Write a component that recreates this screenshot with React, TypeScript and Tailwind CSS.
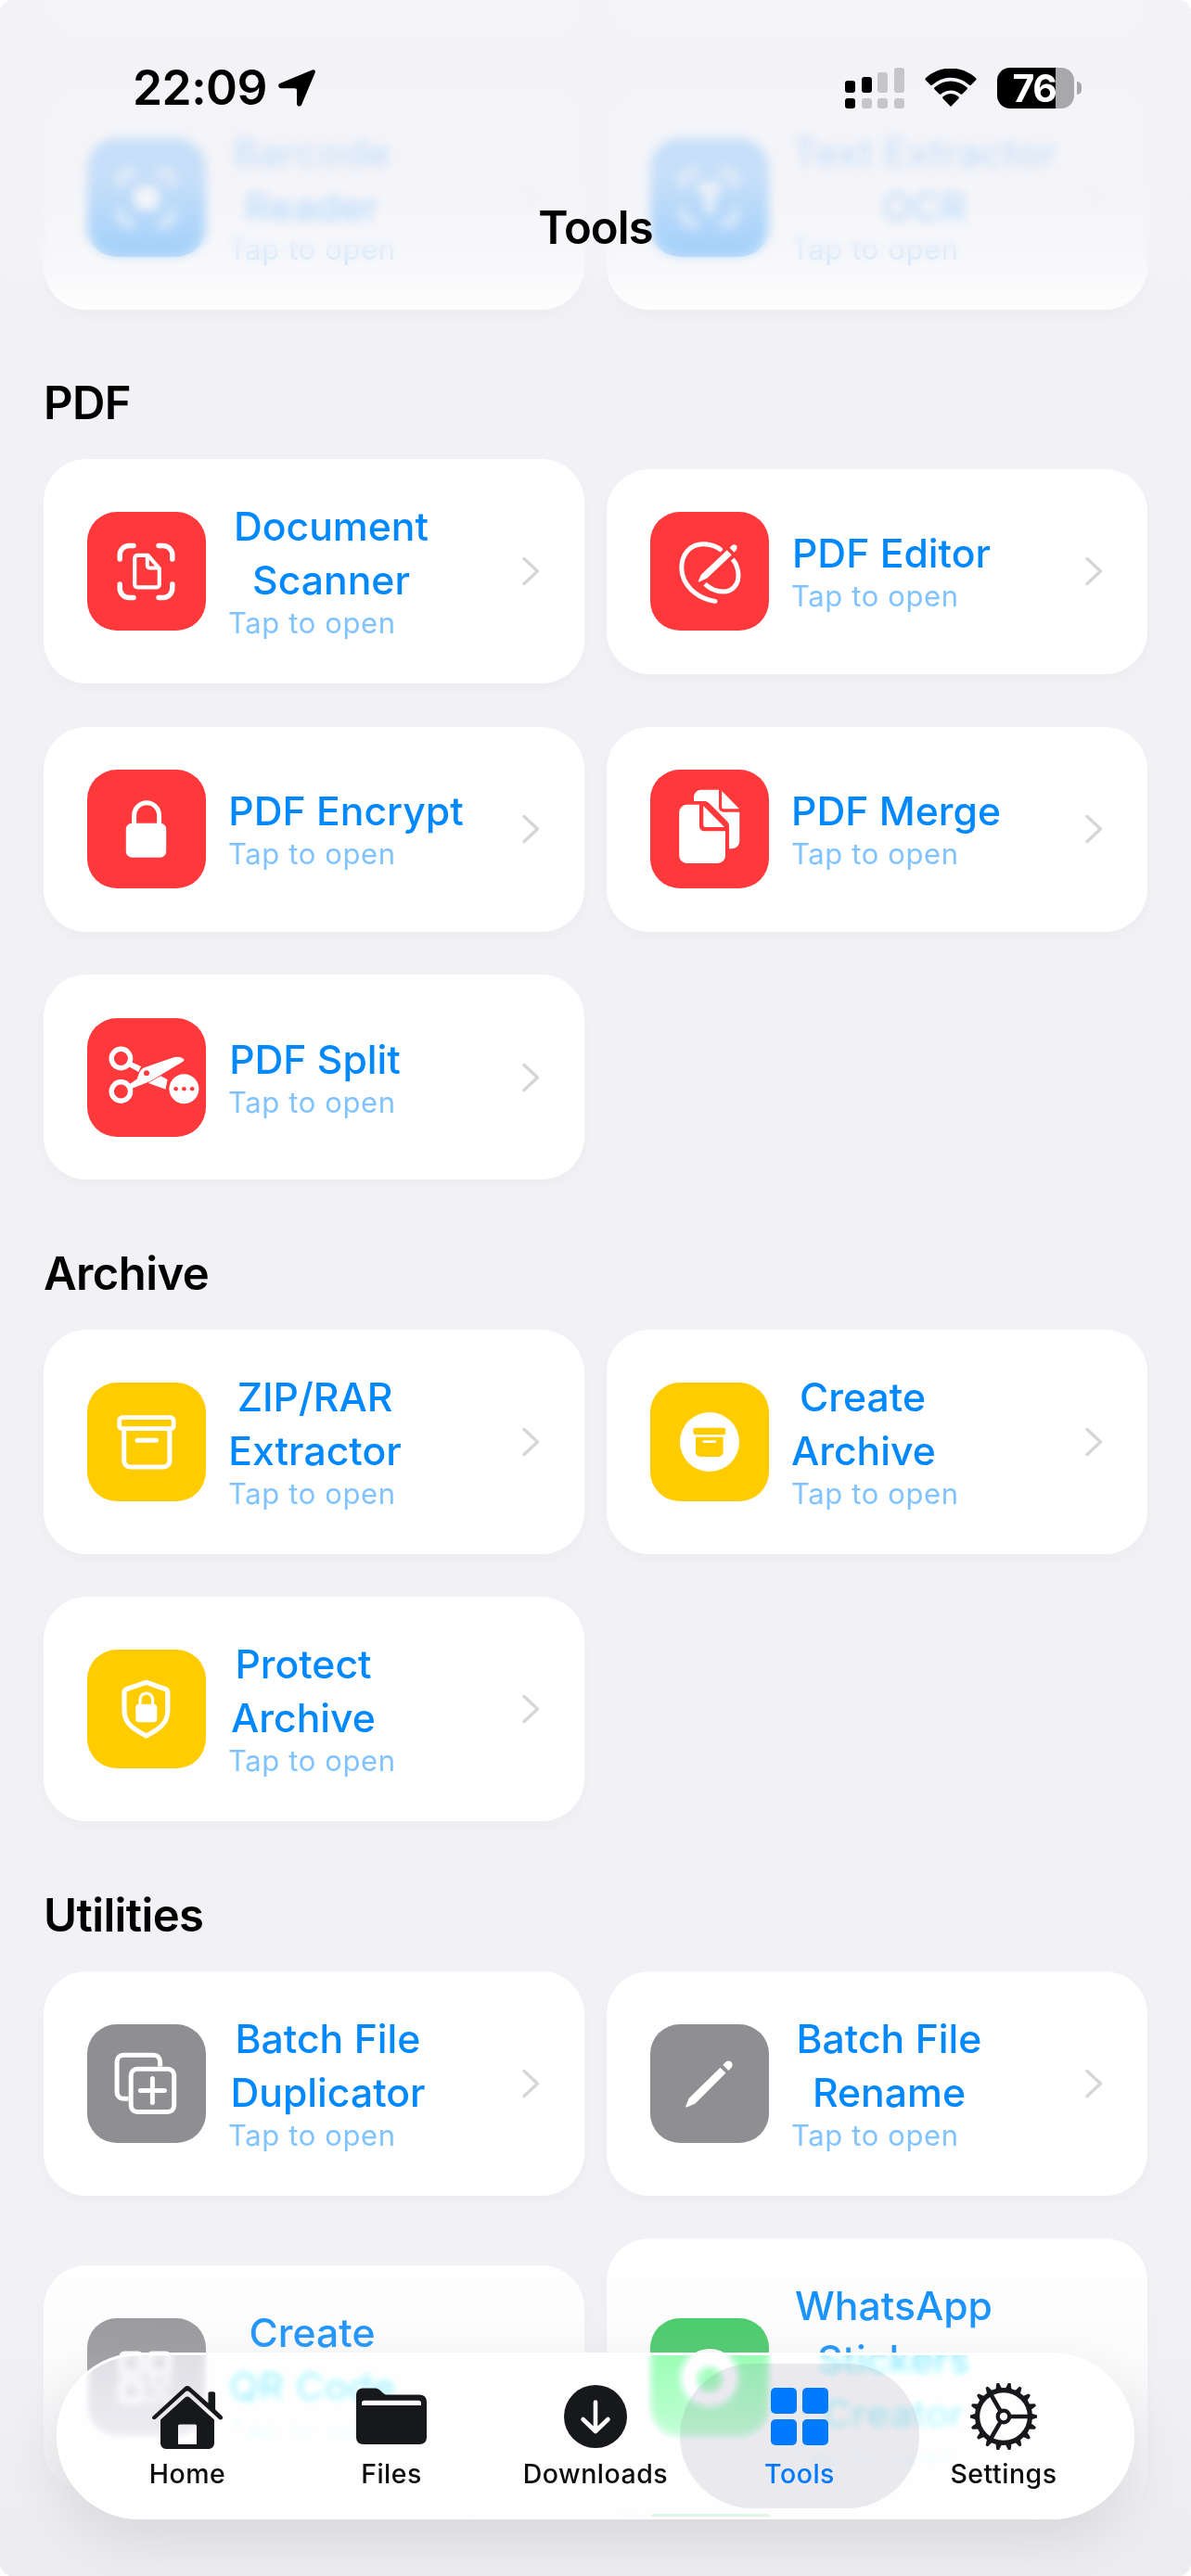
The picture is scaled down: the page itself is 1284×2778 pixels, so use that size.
import type {ReactNode} from "react";

type IconProps = { children: ReactNode };

const TileIcon = ({children}: IconProps) => (
    <svg viewBox="0 0 128 128" className="w-full h-full" fill="none" strokeLinecap="round" strokeLinejoin="round">
        {children}
    </svg>
);

const Brackets = () => (
    <path
        d="M35.2 51V46.5a10 10 0 0 1 10-10H50M77 36.5h4.8a10 10 0 0 1 10 10V51M91.8 78v4.5a10 10 0 0 1-10 10H77M50 92.5h-4.8a10 10 0 0 1-10-10V78"
        stroke="white" strokeWidth="5.4"/>
);

const BarcodeIcon = () => (
    <TileIcon>
        <Brackets/>
        <rect x="51" y="52" width="26" height="25" rx="4" fill="white"/>
    </TileIcon>
);

const TextScanIcon = () => (
    <TileIcon>
        <Brackets/>
        <path d="M54 53h20M64 53v24" stroke="white" strokeWidth="9"/>
    </TileIcon>
);

const ScannerIcon = () => (
    <TileIcon>
        <Brackets/>
        <path d="M54.5 46.8h11L77.8 61v17.3a3 3 0 0 1-3 3H54.2a3 3 0 0 1-3-3V49.8a3 3 0 0 1 3-3z" stroke="white" strokeWidth="4.2"/>
        <path d="M64.8 47.5V58a2.6 2.6 0 0 0 2.6 2.6h10" stroke="white" strokeWidth="4"/>
    </TileIcon>
);

const EditorIcon = () => (
    <TileIcon>
        <path d="M75.5 40.5C70 36 63 34.7 57 34.7C43 34.7 33.8 46 33.8 60C33.8 78 49 93 70 96.4" stroke="white" strokeWidth="5"/>
        <path d="M88.8 51C93 56 95 62 95 69C95 79 88 86 79 86C71 86 64 82.5 59 77.8" stroke="white" strokeWidth="5" strokeLinecap="butt"/>
        <path d="M82.8 41.2l5 5.2L61 71.7l-8.2 3.8c-.8.3-1.2-.3-.9-1l3-6.8z" fill="white"/>
        <path d="M85.6 38.7l2.7-2.6c3-2.6 7.2 1.6 4.6 4.7l-2.4 3z" fill="white"/>
    </TileIcon>
);

const LockIcon = () => (
    <TileIcon>
        <path d="M50.6 60V49.5a13.5 13.8 0 0 1 27 0V60" stroke="white" strokeWidth="5"/>
        <rect x="41.8" y="57.7" width="43.4" height="37" rx="6.5" fill="white"/>
    </TileIcon>
);

const MergeIcon = () => (
    <TileIcon>
        <path d="M47 34v-4.3a8 8 0 0 1 8-8h19v19a5 5 0 0 0 5 5h17.3v31.5a8 8 0 0 1-8 8h-3.2V61c0-2-.8-3.7-2.2-5.2L64.4 37c-2-2-3.8-3-6.2-3z" fill="white"/>
        <path d="M77.2 23L96 42.3H79a1.8 1.8 0 0 1-1.8-1.8z" fill="white"/>
        <path d="M39.5 37.7H53V61a5.2 5.2 0 0 0 5.2 5.2H81V92.7a8.3 8.3 0 0 1-8.3 8.3H39.5a8.3 8.3 0 0 1-8.3-8.3V46a8.3 8.3 0 0 1 8.3-8.3z" fill="white"/>
        <path d="M57.3 39L80 62H59.3a2 2 0 0 1-2-2z" fill="white"/>
    </TileIcon>
);

const SplitIcon = () => (
    <TileIcon>
        <circle cx="36.4" cy="43.5" r="10.2" stroke="white" strokeWidth="5.4"/>
        <circle cx="36.4" cy="79" r="10.2" stroke="white" strokeWidth="5.4"/>
        <path d="M46 46.5l12 5.5-2.5 6L44.5 52z" fill="white"/>
        <path d="M45 71.5l9-6c1.5-5.5 2.5-9.5 7-12L91 43c5-1.7 10-2 13.5 1.5-.2 1.5-.8 2-2 2.8L68 68 48 76z" fill="white"/>
        <circle cx="64" cy="59.3" r="3" fill="#ff383c"/>
        <path d="M65.8 70l13.5-7.7 7.2 4-2 10.5z" fill="white"/>
        <circle cx="104.4" cy="76.3" r="16" fill="white"/>
        <circle cx="95.6" cy="76.3" r="2.3" fill="#ff383c"/>
        <circle cx="104.4" cy="76.3" r="2.3" fill="#ff383c"/>
        <circle cx="113.2" cy="76.3" r="2.3" fill="#ff383c"/>
    </TileIcon>
);

const ArchiveIcon = () => (
    <TileIcon>
        <rect x="34.7" y="37.7" width="58.4" height="12" rx="3" stroke="white" strokeWidth="4.8"/>
        <path d="M39.7 50v34.5a6.5 6.5 0 0 0 6.5 6.5h36.2a6.5 6.5 0 0 0 6.5-6.5V50M54 62.3h20.5" stroke="white" strokeWidth="5"/>
    </TileIcon>
);

const CreateArchiveIcon = () => (
    <TileIcon>
        <circle cx="64" cy="64" r="32" fill="white"/>
        <rect x="46.5" y="48.8" width="34.6" height="7.4" rx="1.8" fill="#ffcc00"/>
        <path d="M49 58.7h29.6V75a5 5 0 0 1-5 5H54a5 5 0 0 1-5-5z" fill="#ffcc00"/>
        <rect x="56.5" y="62.2" width="14.6" height="2.9" rx="1" fill="white"/>
    </TileIcon>
);

const ShieldIcon = () => (
    <TileIcon>
        <path d="M63.7 35.2l20.4 7.3a4 4 0 0 1 2.7 3.8V66c0 14.5-11 20.5-23.1 27C51.5 86.5 40 80.5 40 66V46.3a4 4 0 0 1 2.7-3.8z" stroke="white" strokeWidth="5.2"/>
        <path d="M57 61v-7.2a6.8 6.8 0 0 1 13.6 0V61" stroke="white" strokeWidth="3.2"/>
        <rect x="52.3" y="58.8" width="23" height="19.5" rx="3.5" fill="white"/>
    </TileIcon>
);

const DuplicateIcon = () => (
    <TileIcon>
        <path d="M44.5 80.2h-5.7a6.7 6.7 0 0 1-6.7-6.7V39.9a6.7 6.7 0 0 1 6.7-6.7h33.1a6.7 6.7 0 0 1 6.7 6.7v5.6" stroke="white" strokeWidth="5" strokeLinecap="butt"/>
        <rect x="47.2" y="48.2" width="46.5" height="46.3" rx="6.7" stroke="white" strokeWidth="5"/>
        <path d="M70.4 58.5v26M57.4 71.5h26" stroke="white" strokeWidth="5"/>
    </TileIcon>
);

const PencilIcon = () => (
    <TileIcon>
        <path d="M75.5 46.7l6 5.8L48.5 85.5l-9 4c-.9.3-1.5-.4-1.2-1.2l3.5-8.6z" fill="white"/>
        <path d="M78.3 43.8l2.9-2.9c4.5-4 10 1.6 6.1 6.1l-2.9 2.9z" fill="white"/>
    </TileIcon>
);

const QrIcon = () => (
    <TileIcon>
        <rect x="37" y="38" width="21" height="21" rx="3" stroke="white" strokeWidth="5"/>
        <rect x="67" y="38" width="21" height="21" rx="3" stroke="white" strokeWidth="5"/>
        <rect x="37" y="68" width="21" height="21" rx="3" stroke="white" strokeWidth="5"/>
        <path d="M68 69h4M84 69h4M76 78h4M68 88h4M84 88h4" stroke="white" strokeWidth="6"/>
    </TileIcon>
);

const StickerIcon = () => (
    <TileIcon>
        <circle cx="64" cy="64" r="31" fill="white"/>
        <circle cx="64" cy="66" r="14" fill="#34c759"/>
    </TileIcon>
);

type Tool = {
    title: string[];
    // width of the centred title block
    titleWidth: string;
    color: string;
    icon: ReactNode;
};

const scanTools: Tool[] = [
    {title: ["Barcode", "Reader"], titleWidth: "w-[180px]", color: "bg-[#0088ff]", icon: <BarcodeIcon/>},
    {title: ["Text Extractor", "OCR"], titleWidth: "w-[287px]", color: "bg-[#0088ff]", icon: <TextScanIcon/>},
];

const sections: { name: string; tools: Tool[] }[] = [
    {
        name: "PDF",
        tools: [
            {title: ["Document", "Scanner"], titleWidth: "w-[222px]", color: "bg-[#ff383c]", icon: <ScannerIcon/>},
            {title: ["PDF Editor"], titleWidth: "w-[216px]", color: "bg-[#ff383c]", icon: <EditorIcon/>},
            {title: ["PDF Encrypt"], titleWidth: "w-[254px]", color: "bg-[#ff383c]", icon: <LockIcon/>},
            {title: ["PDF Merge"], titleWidth: "w-[226px]", color: "bg-[#ff383c]", icon: <MergeIcon/>},
            {title: ["PDF Split"], titleWidth: "w-[187px]", color: "bg-[#ff383c]", icon: <SplitIcon/>},
        ],
    },
    {
        name: "Archive",
        tools: [
            {title: ["ZIP/RAR", "Extractor"], titleWidth: "w-[187px]", color: "bg-[#ffcc00]", icon: <ArchiveIcon/>},
            {title: ["Create", "Archive"], titleWidth: "w-[154px]", color: "bg-[#ffcc00]", icon: <CreateArchiveIcon/>},
            {title: ["Protect", "Archive"], titleWidth: "w-[162px]", color: "bg-[#ffcc00]", icon: <ShieldIcon/>},
        ],
    },
    {
        name: "Utilities",
        tools: [
            {title: ["Batch File", "Duplicator"], titleWidth: "w-[215px]", color: "bg-[#8e8e93]", icon: <DuplicateIcon/>},
            {title: ["Batch File", "Rename"], titleWidth: "w-[211px]", color: "bg-[#8e8e93]", icon: <PencilIcon/>},
            {title: ["Create", "QR Code"], titleWidth: "w-[181px]", color: "bg-[#8e8e93]", icon: <QrIcon/>},
            {title: ["WhatsApp", "Stickers", "Creator"], titleWidth: "w-[221px]", color: "bg-[#34c759]", icon: <StickerIcon/>},
        ],
    },
];

const ToolCard = ({tool}: { tool: Tool }) => (
    <div className="flex items-center rounded-[46px] bg-white py-[46.5px] pl-[47px] pr-[48px] shadow-[0_6px_14px_rgba(0,0,0,0.025)]">
        <div className={`size-32 shrink-0 overflow-hidden rounded-[32px] ${tool.color}`}>{tool.icon}</div>
        <div className="-mt-[2.5px] mb-[2.5px] ml-[24px] flex-1">
            <h3 className={`text-center text-[42.7px] font-medium leading-[58px] whitespace-nowrap text-[#0088ff] ${tool.titleWidth}`}>
                {tool.title.map((line) => <span key={line} className="block">{line}</span>)}
            </h3>
            <p className="text-[31px] leading-[33px] tracking-[0.6px] whitespace-nowrap text-[#80c3ff]">Tap to open</p>
        </div>
        <svg viewBox="0 0 20 34" className="h-[34px] w-5 shrink-0" fill="none" stroke="#d6d6d9" strokeWidth="3.5" strokeLinecap="round" strokeLinejoin="round">
            <path d="M3 3.5L17.5 17L3 30.5"/>
        </svg>
    </div>
);

const ToolGrid = ({tools}: { tools: Tool[] }) => (
    <div className="grid grid-cols-2 items-center gap-x-6 gap-y-[46.5px]">
        {tools.map((tool) => <ToolCard key={tool.title.join(" ")} tool={tool}/>)}
    </div>
);

const signalBars = [
    {top: "h-[13px]", topColor: "bg-black", bottomColor: "bg-black"},
    {top: "h-[17px]", topColor: "bg-black", bottomColor: "bg-[#c6c5ca]"},
    {top: "h-[22px]", topColor: "bg-[#c6c5ca]", bottomColor: "bg-[#c6c5ca]"},
    {top: "h-[27px]", topColor: "bg-[#c6c5ca]", bottomColor: "bg-[#c6c5ca]"},
];

const StatusBar = () => (
    <div className="flex h-[189px] items-center pl-[143px] pr-[118px]">
        <span className="text-[51.5px] font-semibold tracking-[-0.5px] text-black">22:09</span>
        <svg viewBox="0 0 40 40" className="ml-[12px] size-10">
            <path d="M36.5.6C38.8-.4 40.5 1.2 39.6 3.6L25.3 37.5c-1.2 3-5.3 2.6-5.3-.8V22.5c0-1.6-.7-2.3-2.3-2.3H3.2c-3.5 0-4.2-4.1-1-5.4z" fill="black"/>
        </svg>
        <div className="ml-auto flex h-11 items-end gap-[6.6px]">
            {signalBars.map((bar, index) => (
                <div key={index} className="flex flex-col gap-[6px]">
                    <div className={`w-[11px] rounded-[3px] ${bar.top} ${bar.topColor}`}/>
                    <div className={`h-[11px] w-[11px] rounded-[3px] ${bar.bottomColor}`}/>
                </div>
            ))}
        </div>
        <svg viewBox="0 0 56 41" className="ml-[22px] h-[41px] w-14">
            <path d="M28 41l-8.3-8.6c-.8-.9-.7-1.8.2-2.5a12.8 12.8 0 0 1 16.2 0c.9.7 1 1.6.2 2.5z"/>
            <path d="M15.4 27.3l-4.7-4.8c-.8-.8-.8-1.8.1-2.5a26 26 0 0 1 34.4 0c.9.7.9 1.7.1 2.5l-4.7 4.8c-.7.7-1.5.7-2.3 0a15.6 15.6 0 0 0-20.6 0c-.8.7-1.6.7-2.3 0z"/>
            <path d="M6 17.5L1 12.6c-.8-.8-.8-1.7.1-2.5a39.5 39.5 0 0 1 53.8 0c.9.8.9 1.7.1 2.5l-5 4.9c-.8.7-1.5.7-2.3 0a29 29 0 0 0-39.4 0c-.8.7-1.5.7-2.3 0z"/>
        </svg>
        <div className="ml-[22px] flex items-center">
            <div className="flex h-11 w-[83px] items-center justify-center rounded-[14px] bg-linear-to-r from-black from-[76%] to-[#a8a8aa] to-[76%]">
                <span className="-ml-[3px] text-[41px] font-bold leading-[44px] tracking-[-1.5px] text-white">76</span>
            </div>
            <div className="ml-[3px] h-[14px] w-[5px] rounded-r-full bg-[#a8a8aa]"/>
        </div>
    </div>
);

const HomeIcon = () => (
    <svg viewBox="0 0 80 70" className="h-[70px] w-20" fill="#17181b">
        <path d="M3 34.5L37 3.2c1.8-1.7 4.3-1.7 6 0L62.5 20.5V10.5c0-1.5.8-2.3 2.3-2.3h3c1.5 0 2.3.8 2.3 2.3v17L77 34c3 2.8-.4 6-3 3.7L42.5 8.7c-1.6-1.5-3.4-1.5-5 0L6 37.5c-2.8 2-5.5-1-3-3z"/>
        <path fillRule="evenodd" d="M11 38.5L37.5 14.5c1.6-1.5 3.4-1.5 5 0L69 38.5V64a6 6 0 0 1-6 6H17a6 6 0 0 1-6-6zM31.500 43.500a1.500 1.500 0 0 0-1.500 1.500v20h20V45a1.500 1.500 0 0 0-1.500-1.500z"/>
    </svg>
);

const FilesIcon = () => (
    <svg viewBox="0 0 76 62" className="h-[62px] w-[76px]">
        <path d="M0 8.500C0 3 3 .5 8 .5h11c3 0 5 .6 7 2.500l3 2.700C30.500 7 32 7.500 34 7.500h34c5.300 0 8 2.700 8 8V53c0 5.300-2.700 8-8 8H8c-5.300 0-8-2.700-8-8z" fill="#17181b"/>
        <path d="M6 19v-2.500a2.800 2.800 0 0 1 2.800-2.800h58.400a2.800 2.800 0 0 1 2.800 2.800V19z" fill="#fdfdfe"/>
    </svg>
);

const DownloadsIcon = () => (
    <svg viewBox="0 0 68 68" className="size-[68px]">
        <circle cx="34" cy="34" r="34" fill="#17181b"/>
        <path d="M34 18.500v31M20.500 37L34 50l13.500-13" fill="none" stroke="white" strokeWidth="4.6" strokeLinecap="round" strokeLinejoin="round"/>
    </svg>
);

const ToolsIcon = () => (
    <svg viewBox="0 0 62 62" className="size-[62px]" fill="#007aff">
        <rect width="28" height="28" rx="5"/>
        <rect x="34" width="28" height="28" rx="5"/>
        <rect y="34" width="28" height="28" rx="5"/>
        <rect x="34" y="34" width="28" height="28" rx="5"/>
    </svg>
);

const SettingsIcon = () => (
    <svg viewBox="-36 -36 72 72" className="size-[72px]" fill="none" stroke="#17181b">
        <circle r="28.4" strokeWidth="5.2"/>
        <circle r="6.3" strokeWidth="4.2"/>
        {[0, 120, 240].map((angle) => (
            <path key={angle} d="M8 0H27" strokeWidth="4.6" transform={`rotate(${angle})`}/>
        ))}
        {Array.from({length: 18}, (_, i) => (
            <path key={i} d="M29.5-3.5L35-1.8a1.8 1.8 0 0 1 0 3.6L29.5 3.5z" fill="#17181b" stroke="none" transform={`rotate(${i * 20})`}/>
        ))}
    </svg>
);

const tabs = [
    {name: "Home", icon: <HomeIcon/>},
    {name: "Files", icon: <FilesIcon/>},
    {name: "Downloads", icon: <DownloadsIcon/>},
    {name: "Tools", icon: <ToolsIcon/>, active: true},
    {name: "Settings", icon: <SettingsIcon/>},
];

const TabBar = () => (
    <nav className="absolute left-[61px] top-[2537px] flex h-[180px] w-[1162px] justify-center overflow-hidden rounded-full border-[3px] border-white bg-[#fdfdff]/60 shadow-[0_22px_60px_rgba(0,0,0,0.09)] backdrop-blur-[4px] backdrop-brightness-110 backdrop-saturate-200">
        {/* next row showing through the lower rim of the glass */}
        <div className="absolute bottom-0 left-[638px] h-[3px] w-32 rounded-t-full bg-[#34c759]/15"/>
        {tabs.map((tab) => (
            <div key={tab.name} className="relative flex w-[220px] flex-col items-center pt-[27px]">
                {tab.active && <div className="absolute -left-[19px] top-[9px] h-[156px] w-[258px] rounded-[78px] bg-[#74748a]/15"/>}
                <div className="relative flex h-[78px] items-center">{tab.icon}</div>
                <span className={`relative mt-[5px] text-[28.5px] font-medium leading-[36px] tracking-[0.5px] ${tab.active ? "text-[#007aff]" : "text-[#0c0d0f]"}`}>
                    {tab.name}
                </span>
            </div>
        ))}
    </nav>
);

export default function App() {
    return (
        <div className="bg-white">
            <div className="relative h-[2778px] w-[1284px] overflow-hidden rounded-[14px] bg-[#f1f1f6] font-['Inter',sans-serif]">
                <main className="px-[47px]">
                    <div className="mb-[46.5px] grid grid-cols-2 gap-x-6">
                        <div className="h-[45px] rounded-b-[46px] bg-white"/>
                        <div className="h-[45px] rounded-b-[46px] bg-white"/>
                    </div>
                    <ToolGrid tools={scanTools}/>
                    {sections.map((section) => (
                        <section key={section.name} className="mt-[71.5px]">
                            <h2 className="mb-[30px] text-[49px] font-semibold leading-[60px] tracking-[-0.6px] text-black">{section.name}</h2>
                            <ToolGrid tools={section.tools}/>
                        </section>
                    ))}
                </main>

                {/* content dissolves under the header and towards the bottom edge */}
                <div className="absolute inset-x-0 top-0 h-[340px] backdrop-blur-[6px] mask-b-from-75% mask-b-to-90%"/>
                <div className="absolute inset-x-0 top-0 h-[350px] bg-[linear-gradient(to_bottom,rgba(242,242,247,0.82)_0,rgba(242,242,247,0.82)_190px,rgba(244,244,248,0.67)_275px,rgba(242,242,247,0.3)_315px,rgba(242,242,247,0)_350px)]"/>
                <div className="absolute inset-x-0 bottom-0 h-[350px] bg-[linear-gradient(to_bottom,rgba(236,236,241,0)_0,rgba(236,236,241,0.2)_110px,rgba(236,236,241,0.65)_230px,rgba(236,236,241,1)_310px)]"/>

                <header className="absolute inset-x-0 top-0">
                    <StatusBar/>
                    <h1 className="mt-[27px] text-center text-[49px] font-semibold leading-[60px] tracking-[-0.9px] text-black">Tools</h1>
                </header>
                <TabBar/>
            </div>
        </div>
    );
}
